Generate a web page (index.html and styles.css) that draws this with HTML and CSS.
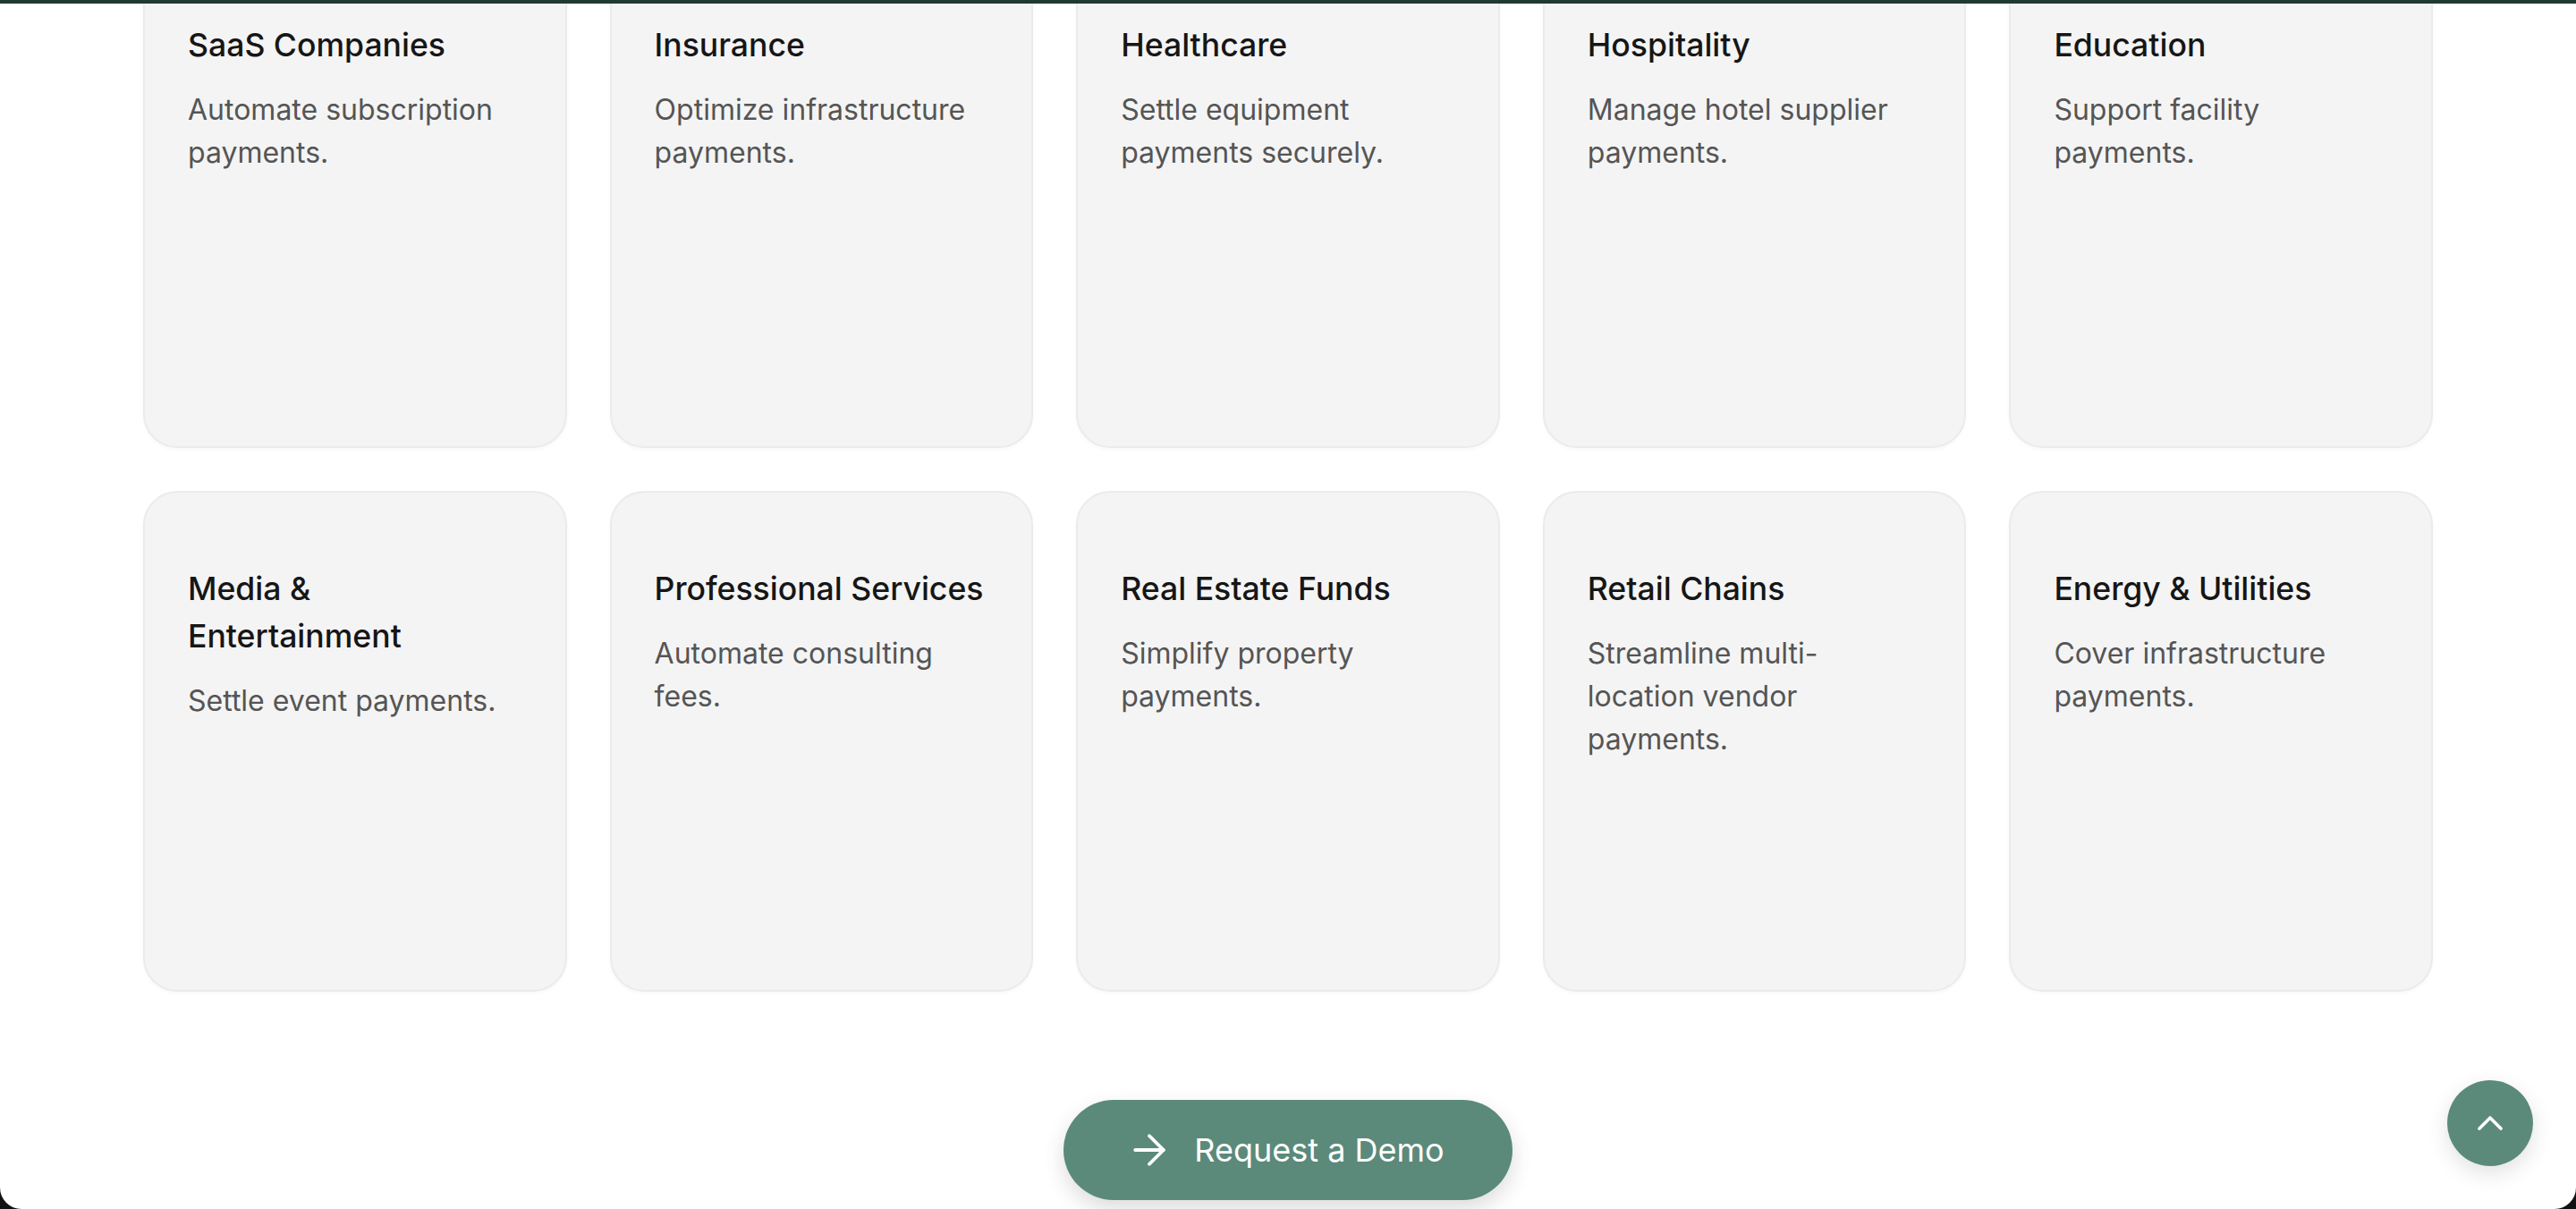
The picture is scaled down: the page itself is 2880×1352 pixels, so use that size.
FILE: index.html
```html
<!DOCTYPE html>
<html lang="en">
<head>
<meta charset="utf-8">
<title>Industries</title>
<link rel="stylesheet" href="styles.css">
</head>
<body>
<div class="frame">
  <main class="page">
    <section class="industries">
      <div class="grid">
        <article class="card"><h3 class="card-title">SaaS Companies</h3><p class="card-text">Automate subscription payments.</p></article>
        <article class="card"><h3 class="card-title">Insurance</h3><p class="card-text">Optimize infrastructure payments.</p></article>
        <article class="card"><h3 class="card-title">Healthcare</h3><p class="card-text">Settle equipment payments securely.</p></article>
        <article class="card"><h3 class="card-title">Hospitality</h3><p class="card-text">Manage hotel supplier payments.</p></article>
        <article class="card"><h3 class="card-title">Education</h3><p class="card-text">Support facility payments.</p></article>
        <article class="card"><h3 class="card-title">Media &amp; Entertainment</h3><p class="card-text">Settle event payments.</p></article>
        <article class="card"><h3 class="card-title">Professional Services</h3><p class="card-text">Automate consulting fees.</p></article>
        <article class="card"><h3 class="card-title">Real Estate Funds</h3><p class="card-text">Simplify property payments.</p></article>
        <article class="card"><h3 class="card-title">Retail Chains</h3><p class="card-text">Streamline multi-location vendor payments.</p></article>
        <article class="card"><h3 class="card-title">Energy &amp; Utilities</h3><p class="card-text">Cover infrastructure payments.</p></article>
      </div>
      <div class="cta">
        <a class="demo-btn" href="#">
          <svg class="demo-icon" viewBox="4 4 16 16" fill="none" stroke="currentColor" stroke-width="1.7" stroke-linecap="round" stroke-linejoin="round"><path d="M5 12h14"/><path d="m12 5 7 7-7 7"/></svg>
          <span>Request a Demo</span>
        </a>
      </div>
    </section>
    <a class="to-top" href="#" aria-label="Back to top">
      <svg viewBox="0 0 24 24" fill="none" stroke="currentColor" stroke-width="1.8" stroke-linecap="round" stroke-linejoin="round"><path d="m18 15-6-6-6 6"/></svg>
    </a>
  </main>
</div>
</body>
</html>
```

FILE: styles.css
```css
* { box-sizing: border-box; }

html, body {
  margin: 0;
  padding: 0;
  background: #121212;
  height: 100%;
}

.frame {
  width: 2880px;
  height: 1352px;
  overflow: hidden;
}

.page {
  position: relative;
  height: 1352px;
  background: #ffffff;
  border-top: 4px solid #1f3a33;
  border-radius: 0 0 24px 24px;
  overflow: hidden;
  font-family: "Inter", "Liberation Sans", sans-serif;
}

.industries {
  margin-top: -63px;
}

.grid {
  width: 2560px;
  margin: 0 auto;
  display: grid;
  grid-template-columns: repeat(5, 1fr);
  grid-auto-rows: 560px;
  gap: 48px 48px;
}

.card {
  background: #f4f4f4;
  border: 2px solid #ebebeb;
  border-radius: 38px;
  padding: 81px 48px 48px;
  box-shadow: 0 2px 4px rgba(0, 0, 0, 0.03);
}

.card-title {
  margin: 0;
  font-size: 35.6px;
  line-height: 53px;
  font-weight: 500;
  color: #161616;
}

.card-text {
  margin: 22px 0 0;
  font-size: 32px;
  line-height: 48px;
  font-weight: 400;
  color: #555555;
}

.cta {
  display: flex;
  justify-content: center;
  padding-top: 121px;
}

.demo-btn {
  display: inline-flex;
  align-items: center;
  gap: 32px;
  height: 112px;
  padding: 0 76px 0 78px;
  border-radius: 56px;
  background: #5b8a7a;
  color: #ffffff;
  text-decoration: none;
  font-size: 36px;
  font-weight: 400;
  box-shadow: 0 10px 24px rgba(0, 0, 0, 0.14);
}

.demo-icon {
  width: 36px;
  height: 36px;
  flex: none;
}

.to-top {
  position: absolute;
  right: 48px;
  bottom: 48px;
  width: 96px;
  height: 96px;
  border-radius: 50%;
  background: #5b8a7a;
  color: #ffffff;
  display: flex;
  align-items: center;
  justify-content: center;
  box-shadow: 0 8px 24px rgba(0, 0, 0, 0.12);
}

.to-top svg {
  width: 48px;
  height: 48px;
}
```
